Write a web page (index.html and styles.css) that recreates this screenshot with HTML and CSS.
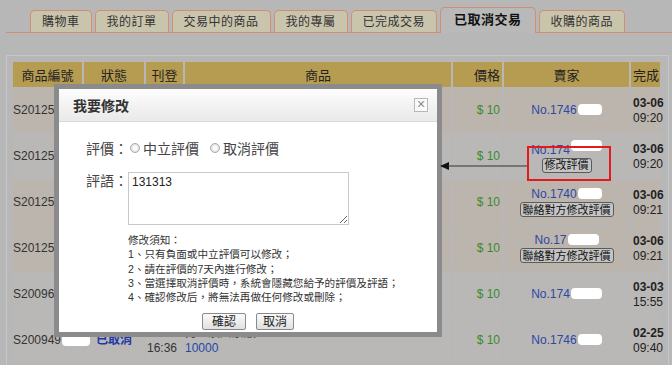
FILE: index.html
```html
<!DOCTYPE html>
<html lang="zh-Hant">
<head>
    <meta charset="UTF-8">
    <title>已取消交易</title>
    <link rel="stylesheet" href="styles.css">
</head>
<body>
    <div class="tabs">
        <span class="tab">購物車</span>
        <span class="tab">我的訂單</span>
        <span class="tab">交易中的商品</span>
        <span class="tab">我的專屬</span>
        <span class="tab">已完成交易</span>
        <span class="tab active">已取消交易</span>
        <span class="tab">收購的商品</span>
    </div>

    <div class="panel">
        <table class="orders">
            <colgroup>
                <col class="c-no"><col class="c-state"><col class="c-date"><col class="c-item">
                <col class="c-price"><col class="c-seller"><col class="c-done">
            </colgroup>
            <thead>
                <tr>
                    <th>商品編號</th><th>狀態</th><th>刊登</th><th>商品</th>
                    <th class="price">價格</th><th>賣家</th><th class="done">完成</th>
                </tr>
            </thead>
            <tbody>
                <tr class="odd">
                    <td class="no">S2012580301</td><td class="state">已取消</td>
                    <td class="date">03-01<br>10:12</td><td class="item">男 - 濱州京版<br><span class="num">10000</span></td>
                    <td class="price">$ 10</td>
                    <td class="seller">No.1746<span class="mask"></span></td>
                    <td class="done"><b>03-06</b><br>09:20</td>
                </tr>
                <tr class="even">
                    <td class="no">S2012580302</td><td class="state">已取消</td>
                    <td class="date">03-01<br>10:14</td><td class="item">男 - 濱州京版<br><span class="num">10000</span></td>
                    <td class="price">$ 10</td>
                    <td class="seller">No.174<span class="mask wide up"></span><br><button class="mini">修改評價</button></td>
                    <td class="done"><b>03-06</b><br>09:20</td>
                </tr>
                <tr class="odd">
                    <td class="no">S2012580303</td><td class="state">已取消</td>
                    <td class="date">03-01<br>10:15</td><td class="item">男 - 濱州京版<br><span class="num">10000</span></td>
                    <td class="price">$ 10</td>
                    <td class="seller">No.1740<span class="mask"></span><br><button class="mini">聯絡對方修改評價</button></td>
                    <td class="done"><b>03-06</b><br>09:21</td>
                </tr>
                <tr class="odd">
                    <td class="no">S2012580304</td><td class="state">已取消</td>
                    <td class="date">03-01<br>10:17</td><td class="item">男 - 濱州京版<br><span class="num">10000</span></td>
                    <td class="price">$ 10</td>
                    <td class="seller">No.17<span class="mask wide"></span><br><button class="mini">聯絡對方修改評價</button></td>
                    <td class="done"><b>03-06</b><br>09:21</td>
                </tr>
                <tr class="even">
                    <td class="no">S2009690211</td><td class="state">已取消</td>
                    <td class="date">02-27<br>14:02</td><td class="item">男 - 濱州京版<br><span class="num">10000</span></td>
                    <td class="price">$ 10</td>
                    <td class="seller">No.174<span class="mask wide"></span></td>
                    <td class="done"><b>03-03</b><br>15:55</td>
                </tr>
                <tr class="even">
                    <td class="no">S200949<span class="mask long"></span></td><td class="state">已取消</td>
                    <td class="date">02-24<br>16:36</td><td class="item">男 - 濱州京版<br><span class="num">10000</span></td>
                    <td class="price">$ 10</td>
                    <td class="seller">No.1746<span class="mask"></span></td>
                    <td class="done"><b>02-25</b><br>09:40</td>
                </tr>
            </tbody>
        </table>
    </div>

    <!-- dialog opened from the 修改評價 button -->
    <div class="dialog">
        <div class="dialog-head">
            我要修改
            <span class="close">&times;</span>
        </div>
        <div class="dialog-body">
            <div class="field">
                <span class="label">評價：</span>
                <span class="radio"></span><span class="opt">中立評價</span>
                <span class="radio"></span><span class="opt">取消評價</span>
            </div>
            <div class="field comment">
                <span class="label">評語：</span>
                <textarea>131313</textarea>
            </div>
            <div class="notice">
                修改須知：<br>
                1、只有負面或中立評價可以修改；<br>
                2、請在評價的7天內進行修改；<br>
                3、當選擇取消評價時，系統會隱藏您給予的評價及評語；<br>
                4、確認修改后，將無法再做任何修改或刪除；
            </div>
            <div class="actions">
                <button class="btn ok">確認</button>
                <button class="btn">取消</button>
            </div>
        </div>
    </div>

    <svg class="arrow" width="88" height="10" viewBox="0 0 88 10">
        <polygon points="0,5 9,1 9,9" fill="#111"/>
        <line x1="8" y1="5" x2="88" y2="5" stroke="#333" stroke-width="1.2"/>
    </svg>
    <div class="mark"></div>
</body>
</html>
```

FILE: styles.css
```css
body {
    margin: 0;
    height: 365px;
    overflow: hidden;
    position: relative;
    background: #b7b7b7;
    font-family: "Liberation Sans", "Noto Sans CJK TC", sans-serif;
    font-size: 12px;
    color: #222;
}

/* tabs */
.tabs {
    display: flex;
    align-items: flex-end;
    height: 32px;
    margin-left: 6px;
    padding-left: 24px;
    border-bottom: 1px solid #d38d70;
}
.tab {
    height: 21px;
    line-height: 22px;
    padding: 0 11px;
    margin-right: 3px;
    border: 1px solid #d38d70;
    border-bottom: 0;
    border-radius: 5px 5px 0 0;
    background: #c9c4ac;
    color: #333;
    font-size: 12px;
    letter-spacing: 0.5px;
}
.tab.active {
    height: 25px;
    line-height: 24px;
    margin-bottom: -1px;
    padding: 0 13px;
    background: #b9b9b9;
    font-weight: bold;
    font-size: 13px;
    color: #111;
}

/* panel and table */
.panel {
    margin: 22px 3px 0 6px;
    height: 330px;
    border: 1px solid #c6c6c6;
    padding: 5px 0 0 4px;
}
.orders {
    table-layout: fixed;
    width: 651px;
    border-spacing: 2px 1px;
}
.c-no { width: 69px; }
.c-state { width: 60px; }
.c-date { width: 37px; }
.c-item { width: 266px; }
.c-price { width: 49px; }
.c-seller { width: 125px; }
.c-done { width: 29px; }

.orders th {
    height: 25px;
    padding: 0;
    background: #b69c51;
    font-weight: normal;
    font-size: 13px;
    color: #222;
}
.orders td {
    height: 45px;
    padding: 0;
    white-space: nowrap;
    line-height: 15px;
}
.odd td { background: #bbb5ad; }
.even td { background: #b9b8b6; }

.no { color: #333; }
.state { text-align: center; font-weight: bold; color: #1f36a6; }
.date { padding-left: 1px !important; color: #333; }
.item { color: #333; }
.num { color: #2446a8; }
.orders .price { text-align: right; padding-right: 2px; color: #3b8a2c; }
.orders th.price { color: #222; }
.seller { text-align: center; color: #2e48a4; }
.orders .done { padding-left: 2px; color: #222; text-align: left; }

.mask {
    display: inline-block;
    width: 24px;
    height: 11px;
    margin-left: 1px;
    border-radius: 4px;
    background: #fff;
    vertical-align: -1px;
}
.mask.wide { width: 31px; }
.mask.up { vertical-align: 3px; }
.mask.long { width: 28px; vertical-align: -2px; }

.mini {
    height: 15px;
    padding: 0 2px;
    border: 1px solid #5a5a5a;
    border-radius: 3px;
    background: #c4c4c4;
    font-family: inherit;
    font-size: 11px;
    line-height: 12px;
    color: #111;
}

/* dialog */
.dialog {
    position: absolute;
    left: 54px;
    top: 84px;
    width: 378px;
    height: 243px;
    border: 5px solid #8b8b8b;
    background: #fff;
}
.dialog-head {
    position: relative;
    height: 32px;
    line-height: 34px;
    padding-left: 14px;
    border-bottom: 1px solid #d9d9d9;
    background: linear-gradient(#fdfdfd, #e9e9e9);
    font-size: 14px;
    font-weight: bold;
    color: #333;
}
.close {
    position: absolute;
    right: 9px;
    top: 9px;
    width: 12px;
    height: 12px;
    border: 1px solid #b8b8b8;
    background: #fafafa;
    font-size: 14px;
    line-height: 11px;
    text-align: center;
    font-weight: normal;
    color: #8a8a8a;
}
.dialog-body { padding-left: 27px; }
.field {
    display: flex;
    align-items: center;
    margin-top: 16px;
    height: 20px;
    font-size: 14px;
    color: #444;
}
.label { width: 44px; }
.radio {
    width: 8px;
    height: 8px;
    margin-right: 3px;
    border: 1px solid #a9a9a9;
    border-radius: 50%;
    background: radial-gradient(#fafafa 30%, #d0d0d0);
}
.opt { margin-right: 11px; }
.field.comment {
    align-items: flex-start;
    margin-top: 14px;
    height: auto;
}
.comment .label { line-height: 16px; margin-top: 1px; }
.comment textarea {
    box-sizing: border-box;
    width: 221px;
    height: 53px;
    margin: 0 0 0 -2px;
    padding: 2px 3px;
    border: 1px solid #c8c8c8;
    font-family: "Liberation Sans", sans-serif;
    font-size: 12px;
    color: #222;
    resize: both;
}
.notice {
    margin: 8px 0 0 42px;
    font-size: 10.6px;
    line-height: 14.3px;
    color: #333;
}
.actions {
    display: flex;
    justify-content: center;
    gap: 10px;
    margin: 9px 0 0 -27px;
}
.btn {
    height: 17px;
    padding: 0 6px;
    border: 1px solid #8a8a8a;
    border-radius: 2px;
    background: linear-gradient(#fbfbfb, #e0e0e0);
    font-family: inherit;
    font-size: 12px;
    line-height: 14px;
    color: #222;
}
.btn.ok { padding: 0 9px; }

/* callout */
.arrow {
    position: absolute;
    left: 440px;
    top: 161px;
}
.mark {
    position: absolute;
    left: 527px;
    top: 146px;
    width: 84px;
    height: 35px;
    box-sizing: border-box;
    border: 2px solid #e2191d;
}
```
